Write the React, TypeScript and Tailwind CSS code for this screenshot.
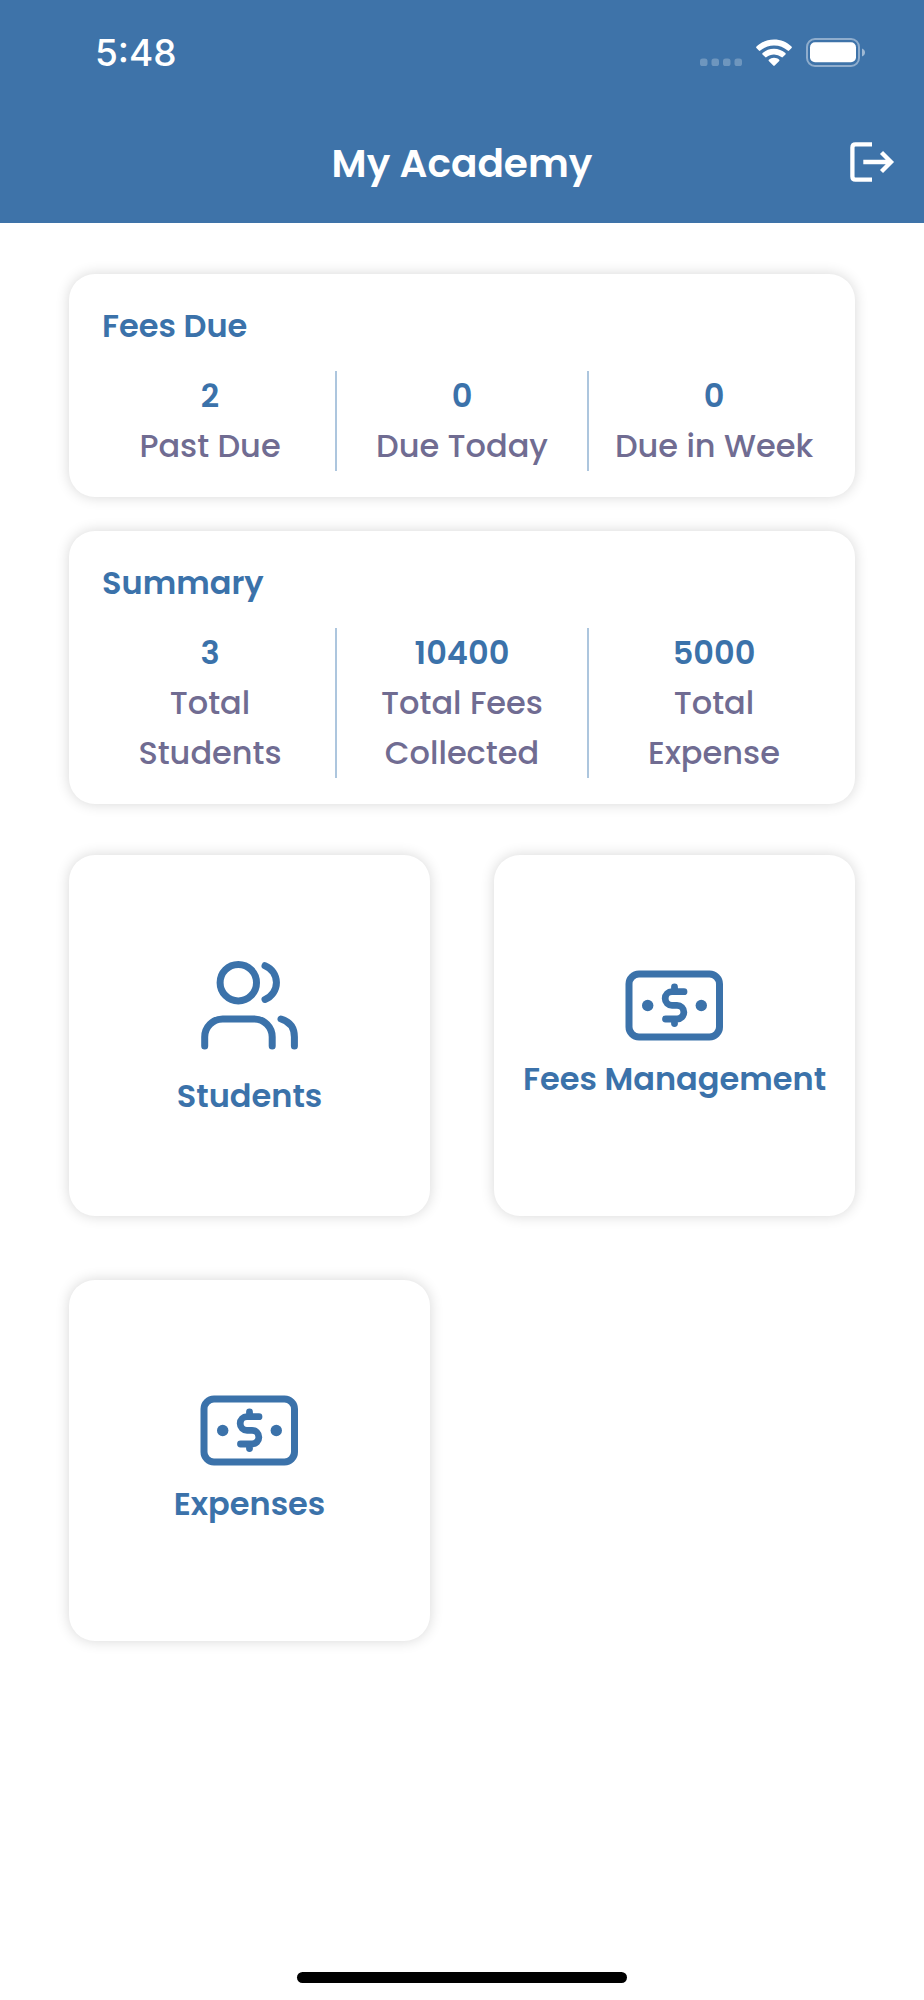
import type { ReactNode } from "react";

type Stat = { value: string; label: string };

const feesDue: Stat[] = [
  { value: "2", label: "Past Due" },
  { value: "0", label: "Due Today" },
  { value: "0", label: "Due in Week" },
];

const summary: Stat[] = [
  { value: "3", label: "Total Students" },
  { value: "10400", label: "Total Fees Collected" },
  { value: "5000", label: "Total Expense" },
];

function StatusBar() {
  return (
    <div className="flex h-[105px] items-center justify-between pl-[95px] pr-[59px]">
      <span className="font-['Inter',sans-serif] text-[37px] leading-[50px] font-medium">5:48</span>
      <div className="flex items-center gap-[14px]">
        <svg viewBox="0 0 42 28" className="h-[28px] w-[42px]" fill="#fff" fillOpacity="0.25" aria-hidden="true">
          <rect x="0" y="19.5" width="7.5" height="7.5" rx="2.6" />
          <rect x="11.5" y="19.5" width="7.5" height="7.5" rx="2.6" />
          <rect x="23" y="19.5" width="7.5" height="7.5" rx="2.6" />
          <rect x="34.5" y="19.5" width="7.5" height="7.5" rx="2.6" />
        </svg>
        <svg viewBox="0 0 36 28" className="h-[28px] w-[36px]" fill="#fff" aria-hidden="true">
          <path d="M18 .6c6.700 0 12.900 2.500 17.500 7 .5.5.5 1 .1 1.500l-2.500 2.500c-.4.4-.9.4-1.400 0A20 20 0 0 0 18 6.400 20 20 0 0 0 4.300 11.600c-.5.4-1 .4-1.400 0L.4 9.100c-.4-.5-.4-1 .1-1.500C5.100 3.100 11.300.6 18 .6Z" />
          <path d="M18 9.700c4.300 0 8.300 1.600 11.400 4.300.5.500.5 1 .1 1.400l-2.700 2.700c-.4.400-.9.400-1.400 0A11.300 11.300 0 0 0 18 15.400c-2.800 0-5.400 1-7.400 2.700-.5.400-1 .4-1.400 0l-2.700-2.700c-.4-.4-.4-.9.1-1.400A17.200 17.200 0 0 1 18 9.700Z" />
          <path d="M18 18.800c2 0 3.800.7 5.200 1.900.4.400.4.800 0 1.200l-4.500 4.700c-.5.500-.9.500-1.400 0l-4.500-4.700c-.4-.4-.4-.8 0-1.200a8 8 0 0 1 5.200-1.900Z" />
        </svg>
        <svg viewBox="0 0 59 29" className="h-[29px] w-[59px]" aria-hidden="true">
          <rect x="1" y="1" width="52" height="27" rx="8" fill="none" stroke="#fff" strokeOpacity="0.42" strokeWidth="2" />
          <rect x="4" y="4.300" width="46" height="20" rx="5" fill="#fff" />
          <path d="M56 10.500c1.900.7 3 2.100 3 4s-1.100 3.300-3 4Z" fill="#fff" fillOpacity="0.5" />
        </svg>
      </div>
    </div>
  );
}

function Header() {
  return (
    <header className="bg-[#3e73a9] text-white">
      <StatusBar />
      <div className="grid h-[118px] grid-cols-[1fr_auto_1fr] items-start pt-[33px] pr-[29px]">
        <h1 className="col-start-2 pl-[29px] text-[39px] leading-[52px] font-semibold">My Academy</h1>
        <button type="button" aria-label="Log out" className="mt-1 justify-self-end">
          <svg viewBox="0 0 45 40" className="h-[40px] w-[45px]" fill="none" stroke="#fff" strokeWidth="4.300" aria-hidden="true">
            <path d="M22 2.400H5.500Q2.400 2.400 2.400 5.500v29q0 3.100 3.100 3.100H22" />
            <path d="M13.300 20H42M31.500 10.500 41 20l-9.500 9.500" />
          </svg>
        </button>
      </div>
    </header>
  );
}

function StatCard({ title, stats }: { title: string; stats: Stat[] }) {
  return (
    <section className="rounded-[26px] bg-white pt-[27px] pr-[16px] pb-[26px] pl-[14px] shadow-[0_0_14px_rgba(0,0,0,0.16)]">
      <h2 className="pl-[19px] text-[32px] leading-[50px] font-semibold text-[#3b72aa]">{title}</h2>
      <dl className="mt-[20px] grid grid-cols-3">
        {stats.map((s) => (
          <div
            key={s.label}
            className="flex flex-col-reverse justify-end border-l-2 border-[#adc6de] px-[18px] text-center text-[32px] leading-[50px] first:border-transparent"
          >
            <dt className="font-medium text-[#706c92]">{s.label}</dt>
            <dd className="font-semibold text-[#3b72aa]">{s.value}</dd>
          </div>
        ))}
      </dl>
    </section>
  );
}

function StudentsIcon() {
  return (
    <svg viewBox="190 950 120 121" className="h-[121px] w-[120px]" fill="none" stroke="currentColor" strokeWidth="7" strokeLinecap="round" aria-hidden="true">
      <circle cx="238.300" cy="982.700" r="18.200" />
      <path d="M265 965.700a18.200 18.200 0 0 1 0 33.800" />
      <path d="M204.700 1046v-9a18 18 0 0 1 18-18h31.500a18 18 0 0 1 18 18v9" />
      <path d="M281 1019q13.400 4 13.400 18v9" />
    </svg>
  );
}

function MoneyIcon() {
  return (
    <svg viewBox="615 968 120 86" className="h-[86px] w-[120px]" fill="none" stroke="currentColor" strokeLinecap="round" strokeLinejoin="round" aria-hidden="true">
      <rect x="629" y="974" width="90.500" height="63" rx="10" strokeWidth="7" />
      <path d="M684 991.700h-12a6.800 6.800 0 0 0 0 13.600h5a6.800 6.800 0 0 1 0 13.700h-11.500M674.500 991.500v-4.500M674.500 1019v4.500" strokeWidth="6.800" />
      <circle cx="647.700" cy="1005.500" r="5.700" fill="currentColor" stroke="none" />
      <circle cx="701.300" cy="1005.500" r="5.700" fill="currentColor" stroke="none" />
    </svg>
  );
}

function Tile({ label, children }: { label: string; children: ReactNode }) {
  return (
    <button
      type="button"
      className="flex aspect-square flex-col items-center justify-center rounded-[26px] bg-white text-[32px] leading-[50px] font-semibold text-[#3b72aa] shadow-[0_0_14px_rgba(0,0,0,0.16)]"
    >
      {children}
      <span className="whitespace-nowrap">{label}</span>
    </button>
  );
}

export default function App() {
  return (
    <div className="flex min-h-screen flex-col bg-white font-['Poppins','Inter',sans-serif]">
      <Header />
      <main className="px-[69px] pt-[51px]">
        <div className="flex flex-col gap-[34px]">
          <StatCard title="Fees Due" stats={feesDue} />
          <StatCard title="Summary" stats={summary} />
        </div>
        <nav className="mt-[51px] grid grid-cols-2 gap-[64px]">
          <Tile label="Students">
            <StudentsIcon />
          </Tile>
          <Tile label="Fees Management">
            <MoneyIcon />
          </Tile>
          <Tile label="Expenses">
            <MoneyIcon />
          </Tile>
        </nav>
      </main>
      <div className="mt-auto flex justify-center pt-8 pb-[17px]">
        <div className="h-[11px] w-[330px] rounded-full bg-black" />
      </div>
    </div>
  );
}
